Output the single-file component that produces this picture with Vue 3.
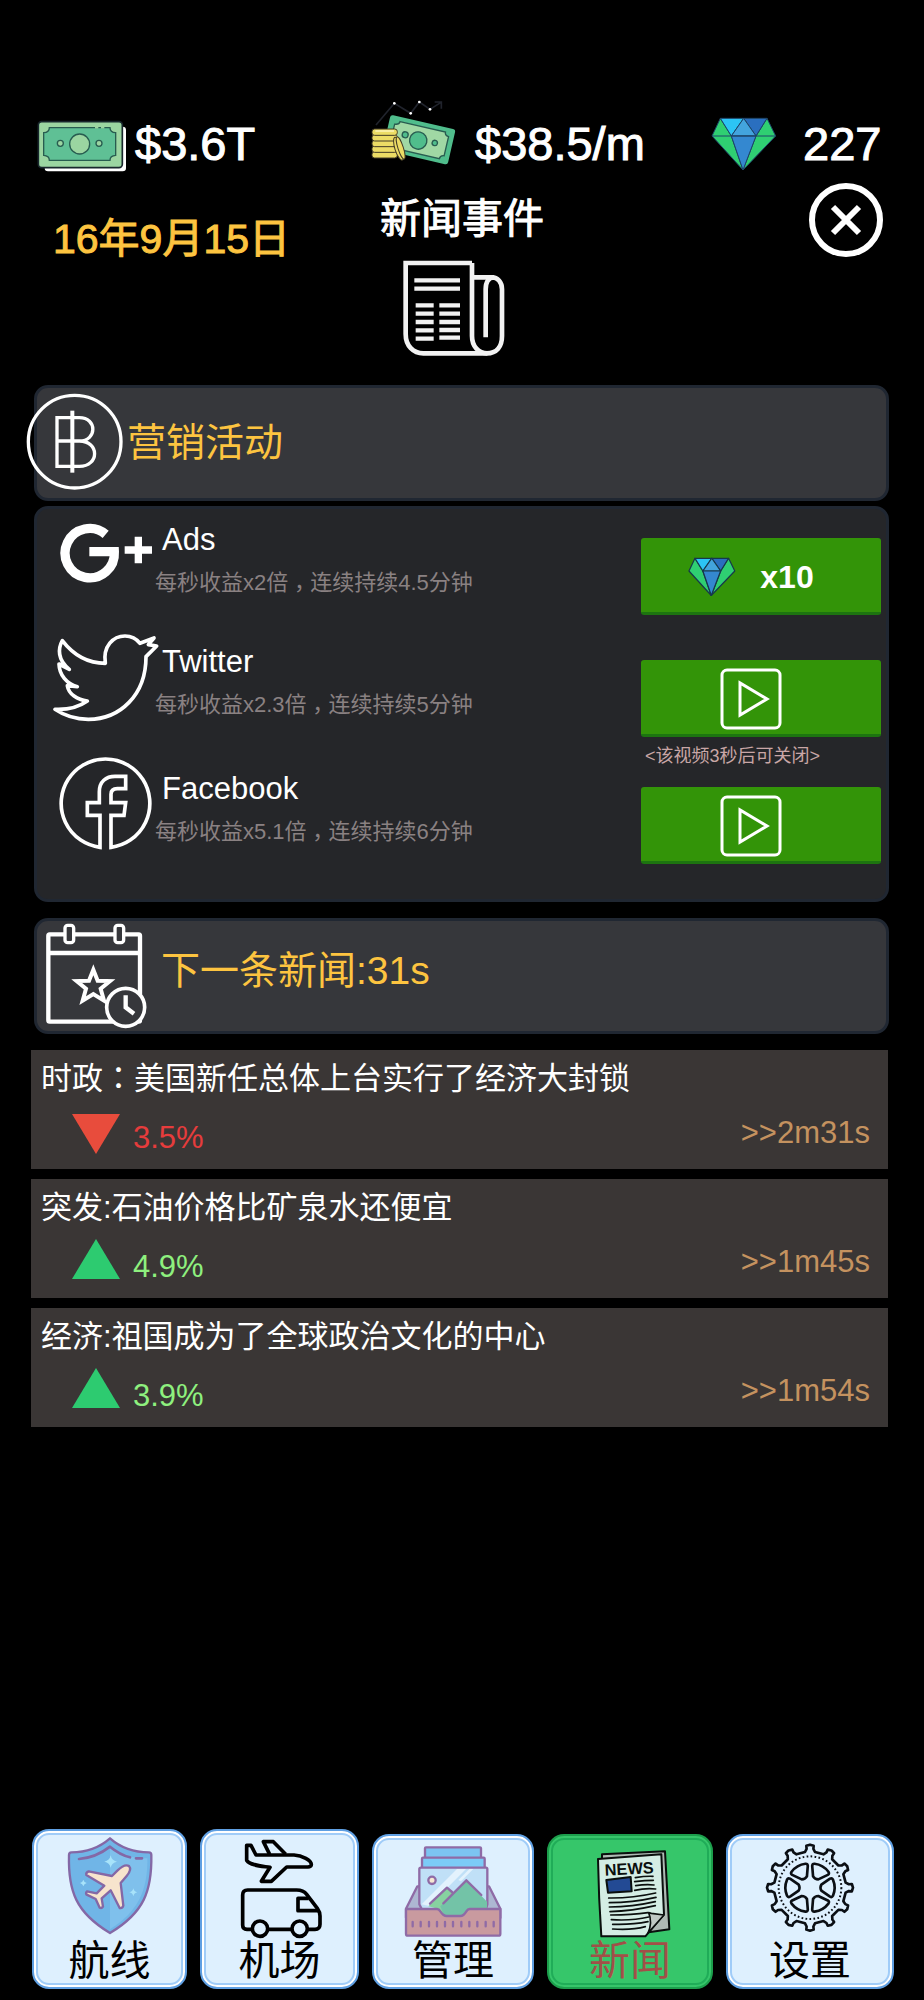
<script setup>
import { ref } from 'vue'

const active = ref('news')

const campaigns = [
  { id: 'google', name: 'Ads', rate: '每秒收益x2倍', time: '连续持续4.5分钟', gems: 'x10' },
  { id: 'twitter', name: 'Twitter', rate: '每秒收益x2.3倍', time: '连续持续5分钟', note: '<该视频3秒后可关闭>' },
  { id: 'facebook', name: 'Facebook', rate: '每秒收益x5.1倍', time: '连续持续6分钟' }
]

const news = [
  { kind: '时政', wide: true, title: '美国新任总体上台实行了经济大封锁', change: '3.5%', up: false, left: '>>2m31s' },
  { kind: '突发', wide: false, title: '石油价格比矿泉水还便宜', change: '4.9%', up: true, left: '>>1m45s' },
  { kind: '经济', wide: false, title: '祖国成为了全球政治文化的中心', change: '3.9%', up: true, left: '>>1m54s' }
]

const tabs = [
  { id: 'routes', label: '航线', view: '178 72 300 312', tall: true },
  { id: 'airport', label: '机场', view: '688 72 300 312', tall: true },
  { id: 'manage', label: '管理', view: '156 72 300 312' },
  { id: 'news', label: '新闻', view: '684 72 300 312' },
  { id: 'settings', label: '设置', view: '210 72 300 312' }
]

// outline of the settings gear, twelve teeth around the origin
const point = (r, deg) => {
  const a = (deg * Math.PI) / 180
  return `${(r * Math.cos(a)).toFixed(1)} ${(r * Math.sin(a)).toFixed(1)}`
}
const gear =
  'M' +
  Array.from({ length: 12 }, (_, i) => {
    const a = i * 30
    return [
      point(108, a - 8),
      point(117, a - 5),
      point(126, a - 5),
      point(129, a),
      point(126, a + 5),
      point(117, a + 5),
      point(108, a + 8)
    ].join('L')
  }).join('L') +
  'Z'
</script>

<template>
  <div class="page">
    <header class="stats">
      <div class="stats__item">
        <svg class="stats__icon" viewBox="102 54 276 252">
          <rect x="134" y="140" width="244" height="134" rx="10" fill="#fff" />
          <rect x="115" y="125" width="252" height="138" rx="10" fill="#9bd5a1" stroke="#18262c" stroke-width="5" />
          <path d="M148 143H330Q330 157 347 158V226Q330 227 330 241H148Q148 227 131 226V158Q148 157 148 143Z" fill="#5fc095" stroke="#285c50" stroke-width="4" />
          <path d="M285 143h10m8 0h10" stroke="#9bd5a1" stroke-width="5" />
          <circle cx="239" cy="192" r="30" fill="#9bd5a1" stroke="#285c50" stroke-width="4" />
          <g fill="#9bd5a1" stroke="#285c50" stroke-width="4">
            <circle cx="181" cy="190" r="9" />
            <circle cx="297" cy="190" r="9" />
          </g>
        </svg>
        <span class="stats__value">$3.6T</span>
      </div>
      <div class="stats__item">
        <svg class="stats__icon" viewBox="1124 54 276 252">
          <path d="M1130 135L1185 70L1234 100L1260 66L1292 88L1325 67M1306 66H1326V86" fill="none" stroke="#20232c" stroke-width="5" />
          <g fill="#fff">
            <circle cx="1185" cy="70" r="4" />
            <circle cx="1234" cy="100" r="4" />
            <circle cx="1260" cy="66" r="4" />
            <circle cx="1292" cy="88" r="4" />
          </g>
          <g transform="translate(1174 104) rotate(13)">
            <rect width="200" height="108" rx="8" fill="#50bd8c" />
            <path d="M32 14H172Q172 24 184 25V84Q172 85 172 96H32Q32 85 18 84V25Q32 24 32 14Z" fill="#a0d8a4" stroke="#285c50" stroke-width="4" />
            <circle cx="98" cy="57" r="26" fill="#50bd8c" stroke="#285c50" stroke-width="4" />
            <circle cx="56" cy="49" r="9" fill="#50bd8c" stroke="#285c50" stroke-width="4" />
            <circle cx="148" cy="53" r="8" fill="#50bd8c" stroke="#285c50" stroke-width="4" />
          </g>
          <g fill="#ecdc65" stroke="#443c26" stroke-width="3">
            <rect x="1118" y="215" width="76" height="19" rx="8" />
            <rect x="1118" y="198" width="76" height="19" rx="8" />
            <rect x="1118" y="181" width="76" height="19" rx="8" />
            <rect x="1118" y="164" width="76" height="19" rx="8" />
            <rect x="1118" y="147" width="76" height="19" rx="8" />
            <ellipse cx="1198" cy="206" rx="11" ry="36" transform="rotate(-18 1198 206)" />
            <ellipse cx="1204" cy="204" rx="8" ry="35" transform="rotate(-18 1204 204)" />
          </g>
          <path d="M1128 153H1184" stroke="#fff8c4" stroke-width="4" />
        </svg>
        <span class="stats__value">$38.5/m</span>
      </div>
      <div class="stats__item">
        <svg class="stats__icon stats__icon--gem" viewBox="756 54 240 252">
          <g stroke="#1d4468" stroke-width="3" stroke-linejoin="round">
            <path d="M775 115L750 168L843 270L808 168Z" fill="#2fcf72" />
            <path d="M915 115L941 168L843 270L882 168Z" fill="#2fcf72" />
            <path d="M775 115H845L808 168Z" fill="#2cc4f5" />
            <path d="M845 115H915L882 168Z" fill="#2a6fbf" />
            <path d="M845 115L882 168H808Z" fill="#43a4dd" />
            <path d="M808 168H882L843 270Z" fill="#3488d0" />
            <path d="M750 168H941" />
          </g>
        </svg>
        <span class="stats__value">227</span>
      </div>
    </header>

    <div class="heading">
      <p class="heading__date">16年9月15日</p>
      <div class="heading__center">
        <h1 class="heading__title">新闻事件</h1>
        <svg class="heading__icon" viewBox="1206 540 360 291" fill="none" stroke="#f2f2f2" stroke-width="14">
          <path d="M1416 549H1217V762C1217 798 1240 820 1270 820H1460C1490 820 1506 800 1506 768V628C1506 605 1492 592 1476 592H1416" />
          <path d="M1416 549V768C1416 800 1436 820 1462 820" />
          <path d="M1457 772V628C1457 606 1466 592 1482 592" />
          <path d="M1243 601H1380M1243 626H1380" stroke-width="13" />
          <path d="M1247 676H1301M1318 676H1380M1247 701H1301M1318 701H1380M1247 726H1301M1318 726H1380M1247 751H1301M1318 750H1380M1247 776H1301M1318 773H1380" stroke-width="13" />
        </svg>
      </div>
      <button class="heading__close" aria-label="关闭">
        <svg viewBox="0 0 75 75" fill="none" stroke="#fff" stroke-width="6">
          <circle cx="37" cy="38" r="34" />
          <path d="M24 25L50 51M50 25L24 51" />
        </svg>
      </button>
    </div>

    <main>
      <section class="banner">
        <svg class="banner__icon banner__icon--coin" viewBox="78 75 291 291" fill="none" stroke="#fff" stroke-width="10">
          <circle cx="224" cy="215" r="139" />
          <path d="M217 122V308" stroke-width="12" />
          <path d="M238 213H171M171 143V289H238C299 289 299 213 238 213C292 213 292 143 238 143Z" />
        </svg>
        <h2 class="banner__title">营销活动</h2>
      </section>

      <section class="panel">
        <div v-for="item in campaigns" :key="item.id" class="campaign">
          <svg v-if="item.id === 'google'" class="campaign__icon" viewBox="162 408 300 312" fill="none" stroke="#fff">
            <path d="M317 493A74 74 0 1 0 343 545H268" stroke-width="28" />
            <path d="M374 540H456M415 500V580" stroke-width="22" />
          </svg>
          <svg v-else-if="item.id === 'twitter'" class="campaign__icon" viewBox="162 24 300 312" fill="none" stroke="#fff" stroke-width="11" stroke-linejoin="round">
            <path d="M187 62C220 105 260 130 316 130C308 78 340 48 375 48C395 48 410 57 420 70L462 54L445 74L470 78L438 110C438 225 360 298 265 298C220 298 190 285 165 268C205 270 235 262 262 243C232 240 206 222 202 197L232 200C200 192 178 165 177 132L208 148C172 120 174 85 187 62Z" />
          </svg>
          <svg v-else class="campaign__icon" viewBox="162 402 300 312" fill="none" stroke="#fff" stroke-width="11">
            <path d="M300 679A133 133 0 1 1 333 679V583H372L377 545H333V520C333 508 340 503 352 503H377V466H345C318 466 298 482 298 512V545H262V583H300Z" />
          </svg>
          <div class="campaign__text">
            <h3 class="campaign__name">{{ item.name }}</h3>
            <p class="campaign__info">{{ item.rate }}<span class="mark mark--comma">，</span>{{ item.time }}</p>
          </div>
          <div class="campaign__action">
            <button v-if="item.gems" class="campaign__button">
              <svg class="campaign__gem" viewBox="746 110 200 166">
                <g stroke="#17384c" stroke-width="5" stroke-linejoin="round">
                  <path d="M775 115L750 168L843 270L808 168Z" fill="#2fcf72" />
                  <path d="M915 115L941 168L843 270L882 168Z" fill="#2fcf72" />
                  <path d="M775 115H845L808 168Z" fill="#2cc4f5" />
                  <path d="M845 115H915L882 168Z" fill="#2a6fbf" />
                  <path d="M845 115L882 168H808Z" fill="#43a4dd" />
                  <path d="M808 168H882L843 270Z" fill="#3488d0" />
                </g>
              </svg>
              {{ item.gems }}
            </button>
            <button v-else class="campaign__button" aria-label="播放视频">
              <svg class="campaign__play" viewBox="0 0 62 62" fill="none" stroke="#fff">
                <rect x="2" y="2" width="58" height="58" rx="5" stroke-width="3" />
                <path d="M20 15V47L47 31Z" stroke-width="3" />
              </svg>
            </button>
            <p v-if="item.note" class="campaign__note">{{ item.note }}</p>
          </div>
        </div>
      </section>

      <section class="banner banner--next">
        <svg class="banner__icon banner__icon--calendar" viewBox="132 60 318 330" fill="none" stroke="#fff" stroke-width="13">
          <rect x="145" y="100" width="275" height="262" rx="4" />
          <path d="M145 156H420" />
          <rect x="195" y="73" width="26" height="52" rx="8" fill="#36373b" stroke-width="10" />
          <rect x="345" y="73" width="26" height="52" rx="8" fill="#36373b" stroke-width="10" />
          <path d="M280 206L293 239L330 240L302 263L312 299L280 279L248 299L258 263L230 240L267 239Z" stroke-width="12" />
          <circle cx="377" cy="319" r="57" fill="#36373b" stroke-width="11" />
          <path d="M377 283V319L402 338" />
        </svg>
        <h2 class="banner__title">下一条新闻:31s</h2>
      </section>

      <section class="news">
        <article v-for="item in news" :key="item.title" class="news__card">
          <h3 class="news__title">
            {{ item.kind }}<span v-if="item.wide" class="mark">：</span><template v-else>:</template>{{ item.title }}
          </h3>
          <div class="news__row" :class="item.up ? 'news__row--up' : 'news__row--down'">
            <svg class="news__arrow" viewBox="0 0 48 40">
              <path :d="item.up ? 'M24 -4L48 36H0Z' : 'M0 0H48L24 40Z'" fill="currentColor" />
            </svg>
            <span class="news__change">{{ item.change }}</span>
            <span class="news__left">{{ item.left }}</span>
          </div>
        </article>
      </section>
    </main>

    <nav class="tabs">
      <a
        v-for="tab in tabs"
        :key="tab.id"
        href="#"
        class="tabs__item"
        :class="{ 'tabs__item--tall': tab.tall, 'tabs__item--active': active === tab.id }"
        @click.prevent="active = tab.id"
      >
        <svg class="tabs__icon" :viewBox="tab.view">
          <g v-if="tab.id === 'routes'" stroke-linejoin="round" stroke-linecap="round">
            <path d="M328 82C360 110 402 124 445 124Q452 124 452 132C454 240 430 305 328 366C226 305 202 240 205 132Q205 124 212 124C255 124 296 110 328 82Z" fill="#70b5e7" />
            <path d="M328 110C365 138 405 140 440 142C442 240 410 305 328 355Z" fill="#7fc0ec" />
            <path d="M328 82C360 110 402 124 445 124Q452 124 452 132C454 240 430 305 328 366C226 305 202 240 205 132Q205 124 212 124C255 124 296 110 328 82Z" fill="none" stroke="#8468a6" stroke-width="7" />
            <path d="M235 144C275 141 305 125 328 107C345 121 365 133 388 139M406 142H424" fill="none" stroke="#8468a6" stroke-width="8" />
            <path d="M330 133Q333 149 349 152Q333 155 330 170Q327 155 311 152Q327 149 330 133ZM398 232Q400 242 410 244Q400 246 398 256Q396 246 386 244Q396 242 398 232ZM248 206Q250 214 258 216Q250 218 248 226Q246 218 238 216Q246 214 248 206Z" fill="#a8e3fa" />
            <path d="M385 165C375 159 364 165 350 179L334 195L264 181Q255 184 257 192L311 224L288 247L259 241Q254 246 258 251L285 264L297 290Q303 293 307 287L303 262L330 238L357 291Q365 293 368 284L360 216L378 195C389 182 391 172 385 165Z" fill="#f7e4cd" stroke="#8468a6" stroke-width="7" />
          </g>
          <g v-else-if="tab.id === 'airport'" fill="none" stroke="#000" stroke-width="11" stroke-linejoin="round">
            <path d="M738 103H751L766 132H880C905 133 932 148 932 160C932 169 922 168 908 168H858L812 211H782L808 169C780 165 750 164 738 148Z" />
            <path d="M807 130L788 92H818L855 130" />
            <path d="M753 355H739Q726 355 726 342V252Q726 237 741 237H888Q908 237 918 250L950 292Q958 303 958 315V340Q958 355 943 355H922M803 355H872" />
            <path d="M924 262H892V299H954" />
            <circle cx="778" cy="353" r="23" />
            <circle cx="897" cy="353" r="23" />
          </g>
          <g v-else-if="tab.id === 'manage'" stroke="#8f6ba6" stroke-width="7" stroke-linejoin="round" stroke-linecap="round">
            <path d="M199 226L165 293V320H448V293L414 226Z" fill="#adb7d2" />
            <rect x="222" y="109" width="168" height="34" rx="3" fill="#7cc4f2" />
            <rect x="213" y="140" width="188" height="34" rx="3" fill="#7ccbf7" />
            <path d="M205 280V174Q205 170 210 170H405Q409 170 409 174V280L400 310H220Z" fill="#c0e0f7" />
            <path d="M212 280L318 174H345L235 285ZM355 174H367L330 211L322 207Z" fill="#e3f2fd" stroke="none" />
            <path d="M232 286L288 230L318 262L300 312H270L250 290Z" fill="#87d2a0" stroke="none" />
            <path d="M268 286L346 208L408 272V290L340 316H280Z" fill="#73c3a7" stroke="none" />
            <path d="M237 278L288 230L303 243M277 277L346 208L391 252" fill="none" />
            <circle cx="243" cy="208" r="11" fill="#f6e7d2" />
            <path d="M165 294H258Q264 294 268 301Q277 315 287 315H328Q338 315 346 301Q350 294 356 294H448V368Q448 374 442 374H171Q165 374 165 368Z" fill="#c99a9f" />
            <path d="M185 333V346M209 333V346M234 333V346M258 333V346M282 333V346M306 333V346M331 333V346M355 333V346M379 333V346M404 333V346M428 333V346" />
          </g>
          <g v-else-if="tab.id === 'news'" fill="none" stroke="#0a0f0d" stroke-width="6" stroke-linejoin="round" stroke-linecap="round">
            <path d="M750 145V130L939 121L952 355L890 364Z" fill="#aebab4" />
            <path d="M738 144L928 130L936 310L880 376H748Q740 260 738 144Z" fill="#d4ede4" />
            <path d="M898 307L936 312L888 366Q902 335 890 305Z" fill="#bfc9c4" stroke-width="5" />
            <path d="M763 207L836 198L839 241L768 245Z" fill="#234a94" />
            <g stroke-width="5">
              <path d="M850 200Q880 195 903 196M848 212Q880 208 904 208M851 224Q882 219 906 222M848 238Q880 231 911 234" />
              <path d="M770 261Q840 262 911 246M772 275Q840 275 912 259M772 288Q840 288 910 272M774 302Q840 300 910 284M776 312Q840 312 888 305M778 326Q840 330 890 318M782 340Q840 342 888 332M782 354Q840 358 880 347" />
            </g>
            <text x="759" y="194" class="tabs__paper" transform="rotate(-3 759 194)">NEWS</text>
          </g>
          <g v-else transform="translate(360 230)" fill="none" stroke="#0b0f14" stroke-width="8" stroke-linejoin="round">
            <path :d="gear" />
            <circle r="94" stroke-width="6" stroke-dasharray="5 7" />
            <path
              v-for="n in 6"
              :key="n"
              d="M34 -9L60 -27Q66 -30 69 -24Q79 0 69 24Q66 30 60 27L34 9Q29 0 34 -9Z"
              :transform="`rotate(${n * 60})`"
            />
          </g>
        </svg>
        <span class="tabs__label">{{ tab.label }}</span>
      </a>
    </nav>
  </div>
</template>

<style>
body {
  background-color: #000;
}
</style>

<style scoped>
.page {
  display: flex;
  flex-direction: column;
  box-sizing: border-box;
  min-height: 100vh;
  padding: 98px 0 11px;
  color: #fff;
  background-color: #000;
  font-family: 'Liberation Sans', 'Noto Sans CJK SC', sans-serif;
}
h1,
h2,
h3,
p {
  margin: 0;
  font-weight: 400;
}
button {
  padding: 0;
  border: none;
  color: inherit;
  font-family: inherit;
  cursor: pointer;
}
svg {
  display: block;
  flex: none;
  overflow: visible;
}
/* full-width punctuation sits in the middle of its cell */
.mark {
  font-family: 'Noto Sans CJK TC', sans-serif;
  line-height: 1;
}
.mark--comma {
  vertical-align: -6px;
}

.stats {
  display: grid;
  grid-template-columns: 2fr 2fr 1fr;
  padding: 0 40px 0 34px;
}
.stats__item {
  display: flex;
  align-items: center;
  gap: 9px;
}
.stats__icon {
  width: 92px;
  height: 84px;
}
.stats__icon--gem {
  width: 80px;
}
.stats__value {
  padding-top: 7px;
  font-size: 47px;
  line-height: 56px;
  white-space: nowrap;
  -webkit-text-stroke: 1px currentColor;
}

.heading {
  display: grid;
  grid-template-columns: 1fr auto 1fr;
  align-items: start;
  padding: 0 40px;
}
.heading__date {
  padding: 33px 0 0 13px;
  color: #fdc440;
  font-size: 41px;
  line-height: 48px;
  -webkit-text-stroke: 1px currentColor;
}
.heading__center {
  display: flex;
  flex-direction: column;
  align-items: center;
  gap: 18px;
  padding-top: 14px;
}
.heading__title {
  font-size: 41px;
  line-height: 46px;
  -webkit-text-stroke: 1px currentColor;
}
.heading__icon {
  width: 120px;
  height: 97px;
}
.heading__close {
  justify-self: end;
  width: 75px;
  height: 75px;
  background: none;
}

.banner,
.panel {
  box-sizing: border-box;
  margin: 0 35px 0 34px;
  border: 3px solid #202732;
  border-radius: 14px;
}
.banner {
  display: flex;
  align-items: center;
  gap: 4px;
  height: 116px;
  margin-top: 28px;
  background-color: #36373b;
}
.banner--next {
  gap: 11px;
  margin-top: 16px;
  padding-left: 7px;
}
.banner__icon--coin {
  width: 97px;
  height: 97px;
  margin-left: -11px;
}
.banner__icon--calendar {
  width: 106px;
  height: 110px;
}
.banner__title {
  color: #fdc440;
  font-size: 39px;
  line-height: 48px;
}
.banner--next .banner__title {
  padding-bottom: 10px;
}

.panel {
  margin-top: 5px;
  padding: 9px 5px 10px 17px;
  background-color: #252629;
}
.campaign {
  display: grid;
  grid-template-columns: 101px 1fr 240px;
  min-height: 122px;
}
.campaign__icon {
  width: 100px;
  height: 104px;
  margin-top: -12px;
}
.campaign__name {
  padding: 2px 0 0 7px;
  font-size: 31px;
  line-height: 40px;
}
.campaign__info {
  padding-top: 7px;
  color: #8a8182;
  font-size: 22px;
  line-height: 32px;
}
.campaign__action {
  padding-top: 20px;
}
.campaign__button {
  display: flex;
  align-items: center;
  justify-content: center;
  gap: 24px;
  width: 100%;
  height: 77px;
  padding: 4px 20px 0 0;
  border-bottom: 3px solid #1d7410;
  border-radius: 3px;
  background-color: #339408;
  font-size: 32px;
  font-weight: 700;
}
.campaign__gem {
  width: 48px;
  height: 40px;
}
.campaign__play {
  width: 62px;
  height: 62px;
}
.campaign__note {
  padding: 8px 0 0 4px;
  color: #c9a6a6;
  font-size: 18px;
  line-height: 22px;
}

.news {
  display: flex;
  flex-direction: column;
  gap: 10px;
  margin: 16px 36px 0 31px;
}
.news__card {
  box-sizing: border-box;
  height: 119px;
  padding: 9px 18px 0 10px;
  background-color: #3a3635;
}
.news__title {
  font-size: 31px;
  line-height: 40px;
}
.news__row {
  display: flex;
  align-items: flex-start;
  padding: 15px 0 0 31px;
  font-size: 31px;
}
.news__arrow {
  width: 48px;
  height: 40px;
  margin-right: 13px;
}
.news__row--up .news__arrow {
  color: #2dcb70;
}
.news__row--down .news__arrow {
  color: #e84c3c;
}
.news__change {
  line-height: 48px;
}
.news__row--up .news__change {
  color: #8ef07e;
}
.news__row--down .news__change {
  color: #e63c3c;
}
.news__left {
  margin-left: auto;
  color: #c4925f;
  line-height: 38px;
}

.tabs {
  display: grid;
  grid-template-columns: 155fr 159fr 162fr 166fr 168fr;
  align-items: end;
  gap: 13px;
  margin-top: auto;
  padding: 0 30px 0 32px;
}
.tabs__item {
  display: flex;
  flex-direction: column;
  align-items: center;
  justify-content: flex-end;
  box-sizing: border-box;
  height: 155px;
  padding-bottom: 4px;
  border: 2px solid #5f9fe2;
  border-radius: 17px;
  background-color: #def0fe;
  box-shadow: inset 0 0 0 2px #fff, inset 0 0 0 4px #a0ccf8;
  color: #000;
  text-decoration: none;
}
.tabs__item--tall {
  height: 160px;
}
.tabs__item--active {
  border-color: #1c9e4c;
  background-color: #36c66a;
  box-shadow: inset 0 0 0 2px #36c66a, inset 0 0 0 4px #20ac58;
  color: #a14f48;
}
.tabs__icon {
  width: 100px;
  height: 104px;
}
.tabs__label {
  font-size: 41px;
  line-height: 44px;
}
.tabs__paper {
  fill: #0a0f0d;
  stroke: none;
  font-size: 49px;
  font-weight: 700;
}
</style>
